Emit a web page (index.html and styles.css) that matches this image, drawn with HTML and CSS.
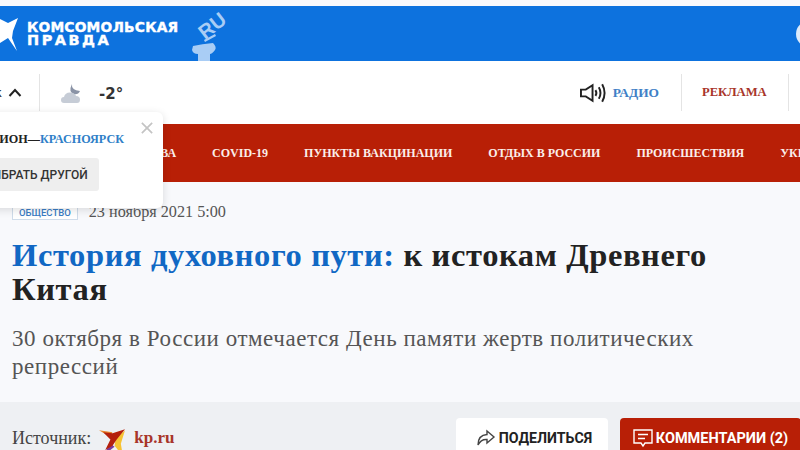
FILE: index.html
```html
<!DOCTYPE html>
<html lang="ru">
	<head>
		<meta charset="utf-8">
		<title>История духовного пути</title>
		<link rel="stylesheet" href="styles.css">
	</head>
	<body>
		<header class="brand">
			<div class="logo">
				<svg class="logo-bird" width="20" height="36" viewBox="0 0 20 36">
					<path fill="#fff" d="M0 3 L8 7 L18 2 L13 15 L12 22 L17 35 L8 22 L0 27 Z"/>
				</svg>
				<div class="logo-text">КОМСОМОЛЬСКАЯ<br><span>ПРАВДА</span></div>
				<svg class="logo-ru" width="36" height="47" viewBox="0 0 36 47">
					<g fill="#a9cdf5">
						<text class="logo-ru-text" x="13" y="26" transform="rotate(-38 13 26)">RU</text>
						<path d="M12 26 L23 20 L24 22 L13 28 Z"/>
						<path d="M1 32 Q10 30 21 29 Q25 33 23 36 Q20 40 18 40 L18 47 L6 47 L6 40 Q1 40 0 36 Z"/>
					</g>
				</svg>
			</div>
			<div class="search-ring"></div>
		</header>

		<div class="tools">
			<div class="city">
				<span class="city-name">Красноярск</span>
				<svg width="14" height="9" viewBox="0 0 14 9"><path d="M1.500 8 L7 2 L12.500 8" fill="none" stroke="#222" stroke-width="2"/></svg>
			</div>
			<div class="weather">
				<svg width="20" height="20" viewBox="0 0 20 20">
					<path fill="#8a93a6" d="M11 0 Q10 6 19 7 Q17 11 13 10 Q7 8 11 0 Z"/>
					<path fill="#c6ccd6" d="M3 19 Q0 19 0 16 Q0 13 3 13 Q4 8.500 9 8.500 Q14 8.500 15 12 Q19 12 19 15.500 Q19 19 16 19 Z"/>
				</svg>
				<span class="temp">-2°</span>
			</div>
			<div class="tools-right">
				<a class="radio">
					<svg width="27" height="20" viewBox="0 0 28 20" fill="none" stroke="#222" stroke-width="2">
						<path d="M1 6.500 H6 L13 2 V18 L6 13.500 H1 Z"/>
						<path d="M16 7 Q18 10 16 13"/>
						<path d="M19.500 4 Q23 10 19.500 16"/>
						<path d="M23 1 Q28 10 23 19"/>
					</svg>
					РАДИО
				</a>
				<a class="ad">РЕКЛАМА</a>
			</div>
		</div>

		<nav class="menu">
			<a class="menu-first">МОСКВА</a>
			<a>COVID-19</a>
			<a>ПУНКТЫ ВАКЦИНАЦИИ</a>
			<a>ОТДЫХ В РОССИИ</a>
			<a>ПРОИСШЕСТВИЯ</a>
			<a>УКРАИНА</a>
		</nav>

		<div class="region">
			<div class="region-title">РЕГИОН—<span>КРАСНОЯРСК</span></div>
			<button class="region-btn">ВЫБРАТЬ ДРУГОЙ</button>
			<svg class="region-close" width="12" height="12" viewBox="0 0 14 14"><path d="M1 1 L13 13 M13 1 L1 13" stroke="#c4c4c4" stroke-width="2"/></svg>
		</div>

		<main class="article">
			<div class="meta">
				<span class="tag">ОБЩЕСТВО</span>
				<span class="date">23 ноября 2021 5:00</span>
			</div>
			<h1><span>История духовного пути:</span> к истокам Древнего Китая</h1>
			<p class="lead">30 октября в России отмечается День памяти жертв политических репрессий</p>
		</main>

		<footer class="source-bar">
			<div class="source">
				Источник:
				<svg width="26" height="23" viewBox="1 0 25 22">
					<path fill="#e8862a" d="M1 3 L14 5 L11 9 Z"/>
					<path fill="#7a3b9c" d="M12 16 L4 28 L16 19 Z"/>
					<path fill="#f6c232" d="M17 11 L26 3 L22 16 L24 28 L16 18 Z"/>
					<path fill="#b4200c" d="M5 5 L14 6 L26 2 L18 12 L14 18 L7 22 L12 12 Z"/>
				</svg>
				<a>kp.ru</a>
			</div>
			<div class="actions">
				<button class="share">
					<svg width="20" height="18" viewBox="0 0 20 18"><path d="M11 2 L18 8 L11 14 V10.500 Q5 10 2 16 Q2 6 11 5.500 Z" fill="none" stroke="#444" stroke-width="1.400"/></svg>
					ПОДЕЛИТЬСЯ
				</button>
				<button class="comments">
					<svg width="20" height="20" viewBox="0 0 20 20" fill="none" stroke="#fff" stroke-width="1.400">
						<path d="M1 2 H19 V15 H12 L10 18 L8 15 H1 Z"/>
						<path d="M5 6.500 H15 M5 10.500 H12"/>
					</svg>
					КОММЕНТАРИИ (2)
				</button>
			</div>
		</footer>
	</body>
</html>
```

FILE: styles.css
```css
html, body{
	margin: 0;
	height: 450px;
	overflow: hidden;
}
body{
	position: relative;
	background: #f8f9fc;
	padding-top: 6px;
	box-sizing: border-box;
	font-family: "Liberation Serif", serif;
	color: #222;
}
a{text-decoration: none;}

.brand{
	display: flex;
	align-items: center;
	justify-content: space-between;
	height: 55px;
	background: #0d72de;
	overflow: hidden;
}
.logo{
	display: flex;
	align-items: center;
	height: 100%;
}
.logo-text{
	margin-left: 7px;
	color: #fff;
	font-family: "DejaVu Sans", sans-serif;
	font-weight: bold;
	font-size: 13.800px;
	letter-spacing: 0.200px;
	line-height: 13px;
	-webkit-text-stroke: 0.400px #fff;
}
.logo-text span{
	font-size: 14.500px;
	letter-spacing: 2.500px;
}
.logo-ru{
	margin-left: 14px;
	align-self: flex-end;
	overflow: visible;
}
.logo-ru-text{
	font-family: "Liberation Sans", sans-serif;
	font-weight: bold;
	font-size: 20px;
}
.search-ring{
	width: 26px;
	height: 26px;
	margin-right: -22px;
	border: 4px solid #dcebfb;
	border-radius: 50%;
	box-sizing: border-box;
}

.tools{
	display: flex;
	align-items: center;
	height: 63px;
	background: #fff;
}
.city{
	display: flex;
	align-items: center;
	justify-content: flex-end;
	gap: 6px;
	width: 40px;
	height: 37px;
	padding-right: 17px;
	box-sizing: border-box;
	border-right: 1px solid #e4e4e4;
	white-space: nowrap;
}
.city-name{
	font-family: "DejaVu Sans", sans-serif;
	font-size: 13px;
	flex: none;
}
.city svg{
	flex: none;
}
.weather{
	display: flex;
	align-items: center;
	margin-left: 21px;
	margin-top: 2px;
}
.temp{
	margin-left: 18px;
	font-family: "DejaVu Sans", sans-serif;
	font-weight: bold;
	font-size: 15px;
	color: #333;
}
.tools-right{
	display: flex;
	align-items: center;
	margin-left: auto;
	height: 37px;
}
.radio{
	display: flex;
	align-items: center;
	gap: 6px;
	padding-right: 22px;
	height: 100%;
	color: #3f80c6;
	font-weight: bold;
	font-size: 13.400px;
}
.ad{
	display: flex;
	align-items: center;
	width: 108px;
	height: 100%;
	padding-left: 20px;
	box-sizing: border-box;
	border-left: 1px solid #e4e4e4;
	border-right: 1px solid #e4e4e4;
	margin-right: 11px;
	color: #a8352a;
	font-weight: bold;
	font-size: 12.600px;
}

.menu{
	display: flex;
	align-items: center;
	gap: 36px;
	height: 58px;
	background: #b81f06;
	overflow: hidden;
	white-space: nowrap;
}
.menu a{
	color: #fbeeea;
	font-weight: bold;
	font-size: 12px;
}
.menu-first{
	margin-left: 122px;
}

/* popup lies over the menu and runs off the left edge */
.region{
	position: absolute;
	left: -40px;
	top: 112px;
	width: 203px;
	height: 96px;
	background: #fff;
	border-radius: 6px;
	box-shadow: 0 2px 8px #0002;
	overflow: hidden;
}
.region-title{
	margin: 20px 0 0 16px;
	font-weight: bold;
	font-size: 12.200px;
	color: #222;
	white-space: nowrap;
}
.region-title span{
	color: #2f7fc8;
}
.region-btn{
	display: block;
	margin: 11px 0 0 12px;
	width: 127px;
	height: 33px;
	background: #eeeeee;
	border: 0;
	border-radius: 3px;
	font-family: "Roboto", sans-serif;
	font-weight: 500;
	font-size: 12px;
	color: #333;
	white-space: nowrap;
}
.region-close{
	position: absolute;
	right: 10px;
	top: 10px;
}

.article{
	height: 220px;
	padding: 21px 12px 0;
	box-sizing: border-box;
}
.meta{
	display: flex;
	align-items: center;
	gap: 11px;
}
.tag{
	padding: 1px 6px;
	background: #fff;
	border: 1px solid #cfdcea;
	font-family: "Roboto", sans-serif;
	font-weight: 500;
	font-size: 9.500px;
	color: #3a7cc4;
}
.date{
	font-size: 16.200px;
	color: #555;
}
h1{
	margin: 16px 0 0;
	font-size: 32.500px;
	letter-spacing: 0.620px;
	line-height: 34px;
	color: #222;
}
h1 span{
	color: #1168c4;
}
.lead{
	margin: 19px 0 0;
	font-size: 23px;
	letter-spacing: 0.550px;
	line-height: 28px;
	color: #555;
}

.source-bar{
	display: flex;
	justify-content: space-between;
	height: 48px;
	padding: 16px 0 0 12px;
	box-sizing: border-box;
	background: #eef0f3;
}
.source{
	display: flex;
	align-items: center;
	height: 32px;
	padding-top: 8px;
	box-sizing: border-box;
	font-size: 18px;
	color: #444;
}
.source svg{
	margin: 1px 9px 0 8px;
}
.source a{
	color: #a8352a;
	font-weight: bold;
	font-size: 17px;
}
.actions{
	display: flex;
	gap: 12px;
	margin-right: -1px;
}
.actions button{
	display: flex;
	align-items: center;
	justify-content: center;
	gap: 3px;
	height: 32px;
	padding: 8px 0 0;
	border: 0;
	border-radius: 4px 4px 0 0;
	font-family: "Roboto", sans-serif;
	font-weight: bold;
	white-space: nowrap;
	box-sizing: border-box;
}
.share{
	width: 152px;
	background: #fff;
	color: #222;
	font-size: 14.200px;
}
.actions .share{
	padding-left: 4px;
}
.comments{
	width: 181px;
	background: #b81f06;
	color: #fff;
	font-size: 14.500px;
}
```
